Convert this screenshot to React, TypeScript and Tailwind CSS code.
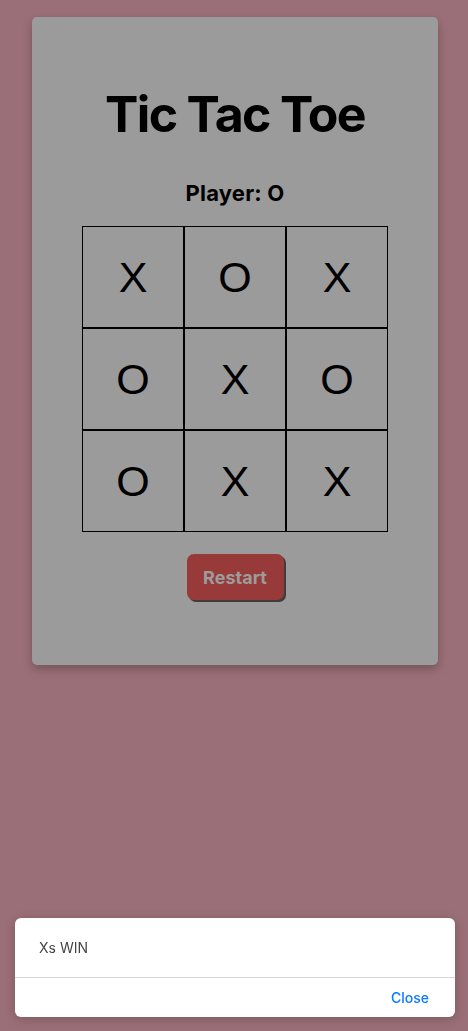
import { useState } from "react";

const initial = ["X", "O", "X", "O", "X", "O", "O", "X", "X"];

const App = () => {
  const [board] = useState<string[]>(initial);
  const [open, setOpen] = useState(true);

  return (
    <div
      className="min-h-[1031px] w-full bg-[#9b6f77] pt-[17px]"
      style={{ fontFamily: "Inter, 'Liberation Sans', sans-serif" }}
    >
      <div className="ml-[32px] flex h-[648px] w-[406px] flex-col items-center rounded-[5px] bg-[#9b9b9b] shadow-[0_4px_10px_rgba(0,0,0,0.25)]">
        <h1 className="mt-[64px] text-[50px] leading-[66px] font-bold tracking-[-0.033em] text-black">
          Tic Tac Toe
        </h1>
        <p className="mt-[32px] text-[22px] leading-[28px] font-bold tracking-[0.01em] text-black">Player: O</p>

        {/* board */}
        <div className="mt-[19px] grid grid-cols-[repeat(3,102px)]">
          {board.map((cell, i) => (
            <div
              key={i}
              className="flex h-[102px] w-[102px] items-center justify-center border border-black text-[43px] text-black"
              style={{ fontFamily: "'Liberation Sans', Arial, sans-serif" }}
            >
              {cell}
            </div>
          ))}
        </div>

        <button className="mt-[22px] h-[46px] w-[97px] rounded-[7px] bg-[#993a3a] text-[18px] font-bold text-[#9c9c9c] shadow-[2px_2px_0_#3d3d3d]">
          Restart
        </button>
      </div>

      {open && (
        <div className="fixed bottom-[14px] left-[15px] w-[440px] rounded-[6px] bg-white shadow-[0_2px_12px_rgba(0,0,0,0.2)]">
          <div className="flex h-[59px] items-center px-[24px] text-[14px] text-[#444]">Xs WIN</div>
          <div className="flex h-[40px] items-center justify-end border-t border-[#d4d4d4] px-[26px]">
            <button onClick={() => setOpen(false)} className="text-[14px] font-medium text-[#0a7aff]">
              Close
            </button>
          </div>
        </div>
      )}
    </div>
  );
};

export default App;
